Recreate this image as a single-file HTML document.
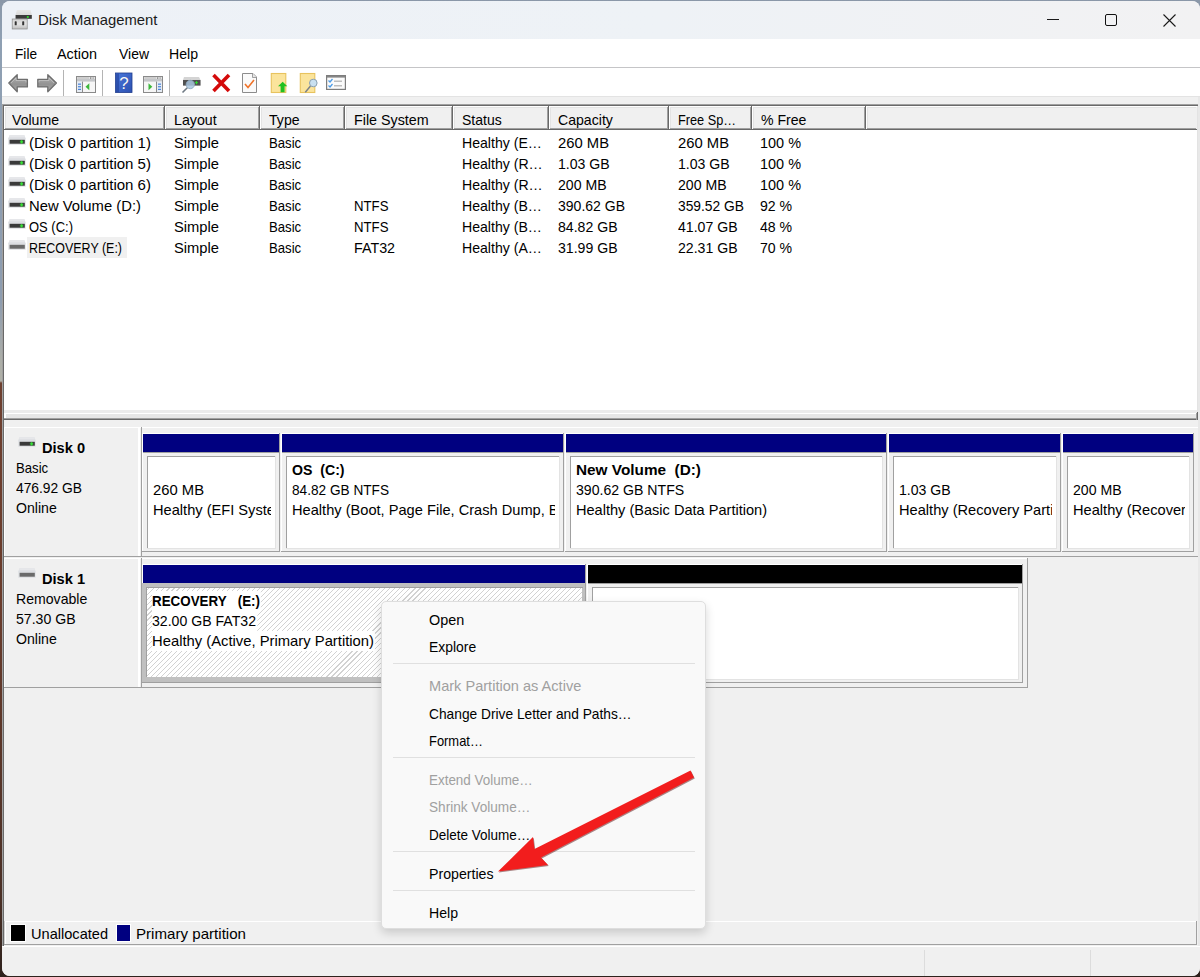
<!DOCTYPE html>
<html><head><meta charset="utf-8"><style>
html,body{margin:0;padding:0;width:1200px;height:977px;overflow:hidden;}
body{position:relative;background:#2a1e19;}
#desk{position:absolute;left:0;top:0;width:1200px;height:977px;background:linear-gradient(180deg,#8a97a8 0px,#8fa0b3 40px,#8e9db0 300px,#acaea8 360px,#b0b0a8 381px,#6e4030 383px,#6a3c2c 600px,#4a3026 900px,#2e221d 977px);}
#win{position:absolute;left:0;top:0;width:1200px;height:977px;clip-path:inset(1px 0px 1px 2px round 8px);background:#f0f0f0;}
.a{position:absolute;}
.t{position:absolute;white-space:nowrap;line-height:20px;font-family:"Liberation Sans",sans-serif;font-size:15px;color:#000;}
.hatch{background-color:#fff;background-image:repeating-linear-gradient(-45deg,#fff 0px,#fff 2.8px,#d2d2d2 2.8px,#d2d2d2 3.55px);}
</style></head><body>
<div id="desk"></div>
<div id="win">
<div class="a" style="left:0px;top:0px;width:1200px;height:39px;background:linear-gradient(90deg,#edf1f7 0%,#eef2f6 55%,#f2f2f3 100%)"></div>
<svg class="a" style="left:11px;top:9px" width="22" height="22" viewBox="0 0 22 22">
<defs><linearGradient id="dtop" x1="0" y1="0" x2="0" y2="1"><stop offset="0" stop-color="#e8e8e8"/><stop offset="1" stop-color="#cfcfcf"/></linearGradient>
<linearGradient id="usb" x1="0" y1="0" x2="0" y2="1"><stop offset="0" stop-color="#d2d2d2"/><stop offset="0.5" stop-color="#e4e4e4"/><stop offset="1" stop-color="#bcbcbc"/></linearGradient></defs>
<path d="M6 1 H19.5 L20.8 5.5 V9.8 H4.6 V5.5 Z" fill="url(#dtop)"/>
<rect x="4.6" y="6" width="16.2" height="3.8" fill="#3a3a3a"/>
<circle cx="16.8" cy="8" r="1.1" fill="#2ee02e"/>
<rect x="1.2" y="10" width="15" height="10" fill="url(#usb)" stroke="#8a8a8a" stroke-width="0.7"/>
<rect x="3.7" y="12.3" width="2" height="4" rx="0.6" fill="#333"/>
<rect x="11.2" y="12.3" width="2" height="4" rx="0.6" fill="#333"/>
</svg>
<div class="t" style="left:37.6px;top:9.60px;font-size:15px;color:#1b1b1b;transform:scaleX(0.9884);transform-origin:0 0;">Disk Management</div>
<div class="a" style="left:1047px;top:19px;width:12px;height:1px;background:#1a1a1a"></div>
<div class="a" style="left:1105px;top:14px;width:9.6px;height:9.6px;border:1.2px solid #111;border-radius:2px"></div>
<svg class="a" style="left:1163px;top:14px" width="13" height="13" viewBox="0 0 13 13"><path d="M0.5 0.5 L12.5 12.5 M12.5 0.5 L0.5 12.5" stroke="#1a1a1a" stroke-width="1.1"/></svg>
<div class="a" style="left:0px;top:39px;width:1200px;height:28px;background:#fff"></div>
<div class="t" style="left:15px;top:43.50px;font-size:15px;color:#000;transform:scaleX(0.9110);transform-origin:0 0;">File</div>
<div class="t" style="left:57.4px;top:43.50px;font-size:15px;color:#000;transform:scaleX(0.9592);transform-origin:0 0;">Action</div>
<div class="t" style="left:118.9px;top:43.50px;font-size:15px;color:#000;transform:scaleX(0.9302);transform-origin:0 0;">View</div>
<div class="t" style="left:168.8px;top:43.50px;font-size:15px;color:#000;transform:scaleX(0.9408);transform-origin:0 0;">Help</div>
<div class="a" style="left:0px;top:67px;width:1200px;height:1px;background:#c5c5c7"></div>
<div class="a" style="left:0px;top:68px;width:1200px;height:28px;background:#fff"></div>
<div class="a" style="left:0px;top:96px;width:1200px;height:1px;background:#e3e3e3"></div>
<div class="a" style="left:0px;top:97px;width:1200px;height:850px;background:#f0f0f0"></div>
<div class="a" style="left:63px;top:70px;width:1px;height:26px;background:#b4b4b4"></div>
<div class="a" style="left:102px;top:70px;width:1px;height:26px;background:#b4b4b4"></div>
<div class="a" style="left:169px;top:70px;width:1px;height:26px;background:#b4b4b4"></div>

<svg class="a" style="left:0;top:68px" width="360" height="28" viewBox="0 68 360 28">
<defs>
<linearGradient id="garr" x1="0" y1="0" x2="0" y2="1"><stop offset="0" stop-color="#b4b4b4"/><stop offset="0.55" stop-color="#939393"/><stop offset="1" stop-color="#a8a8a8"/></linearGradient>
<linearGradient id="ghelp" x1="0" y1="0" x2="1" y2="1"><stop offset="0" stop-color="#4a78dc"/><stop offset="1" stop-color="#2c50b0"/></linearGradient>
</defs>
<!-- back -->
<path d="M8.8 83 L17.2 74.8 V79.3 H27.4 V86.9 H17.2 V91.8 Z" fill="url(#garr)" stroke="#6e6e6e" stroke-width="1.3" stroke-linejoin="round"/>
<path d="M11 83 L16 78 V80.5 H26 V82.5" fill="none" stroke="#d8d8d8" stroke-width="0.7" opacity="0.7"/>
<!-- forward -->
<path d="M56.4 83 L47.8 74.8 V79.3 H37.8 V86.9 H47.8 V91.8 Z" fill="url(#garr)" stroke="#6e6e6e" stroke-width="1.3" stroke-linejoin="round"/>
<path d="M39 82.5 V80.5 H49 V78 L54 83" fill="none" stroke="#d8d8d8" stroke-width="0.7" opacity="0.7"/>
<!-- console tree -->
<rect x="76.5" y="76.5" width="19" height="16" fill="#f6f6f6" stroke="#8a8a8a"/>
<rect x="77" y="77" width="18" height="2" fill="#e2e2e2"/>
<line x1="77.5" y1="78" x2="89" y2="78" stroke="#b0b0b0" stroke-width="0.8"/>
<rect x="90" y="77.4" width="1.3" height="1.3" fill="#777"/><rect x="92.5" y="77.4" width="1.3" height="1.3" fill="#999"/>
<rect x="77" y="79" width="18" height="2.6" fill="#c4c6c9"/>
<rect x="77" y="81.6" width="5" height="10.4" fill="#e6ecf4"/>
<line x1="82.5" y1="81.6" x2="82.5" y2="92" stroke="#8a8a8a"/>
<rect x="78" y="83.6" width="3" height="1.1" fill="#3b7ad9"/><rect x="78" y="86.2" width="3" height="1.1" fill="#3b7ad9"/><rect x="78" y="88.8" width="3" height="1.1" fill="#3b7ad9"/>
<path d="M85.5 86.8 L89.3 83.3 V90.3 Z" fill="#3cb83c"/>
<!-- help -->
<rect x="115.5" y="73" width="16.5" height="19.5" fill="url(#ghelp)" stroke="#203c8c" stroke-width="0.8"/>
<rect x="116" y="73.5" width="3" height="18.5" fill="#1f3f9a" opacity="0.6"/>
<text x="124.5" y="89.3" font-family="Liberation Sans" font-size="17" fill="#445" text-anchor="middle" opacity="0.5">?</text>
<text x="124" y="88.8" font-family="Liberation Sans" font-size="17" fill="#f4f6ff" text-anchor="middle">?</text>
<!-- action pane -->
<rect x="143.5" y="76.5" width="19" height="16" fill="#f6f6f6" stroke="#8a8a8a"/>
<rect x="144" y="77" width="18" height="2" fill="#e2e2e2"/>
<line x1="144.5" y1="78" x2="156" y2="78" stroke="#b0b0b0" stroke-width="0.8"/>
<rect x="157" y="77.4" width="1.3" height="1.3" fill="#777"/><rect x="159.5" y="77.4" width="1.3" height="1.3" fill="#999"/>
<rect x="144" y="79" width="18" height="2.6" fill="#c4c6c9"/>
<rect x="157" y="81.6" width="5" height="10.4" fill="#e6ecf4"/>
<line x1="156.5" y1="81.6" x2="156.5" y2="92" stroke="#8a8a8a"/>
<rect x="158" y="83.6" width="3" height="1.1" fill="#3b7ad9"/><rect x="158" y="86.2" width="3" height="1.1" fill="#3b7ad9"/><rect x="158" y="88.8" width="3" height="1.1" fill="#3b7ad9"/>
<path d="M148.5 83.3 L152.3 86.8 L148.5 90.3 Z" fill="#3cb83c"/>
<!-- rescan -->
<path d="M184 77 H199 L200.5 80 V86 H183 V80 Z" fill="#d4d4d4"/>
<rect x="183" y="80" width="17.5" height="5.5" fill="#505050"/>
<path d="M195 82.7 h3 M196.5 81.2 v3" stroke="#2ee02e" stroke-width="1"/>
<circle cx="190.3" cy="84.5" r="4.2" fill="#a9c6df" fill-opacity="0.85" stroke="#8aa6bd" stroke-width="0.8"/>
<line x1="187.3" y1="87.8" x2="182.5" y2="92.5" stroke="#6f7a84" stroke-width="1.6"/>
<!-- red X -->
<path d="M213.5 75 L229 91 M229 75 L213.5 91" stroke="#d40a0a" stroke-width="3.6"/>
<!-- doc check -->
<path d="M242.5 73.5 H253 L256.5 77 V92.5 H242.5 Z" fill="#fafafa" stroke="#8c8c8c"/>
<path d="M252.5 73.5 V77.5 H256.5" fill="#e6e6e6" stroke="#8c8c8c" stroke-width="0.8"/>
<path d="M245 84 L248 87.5 L254 80" fill="none" stroke="#f0742a" stroke-width="1.6"/>
<!-- folder up -->
<rect x="271.3" y="73.5" width="14.5" height="19" fill="#fbe49c" stroke="#e8c35e" stroke-width="1.1"/>
<path d="M278 86.3 L282.7 81.8 L287.3 86.3 H284.6 V92.3 H280.6 V86.3 Z" fill="#22c022"/>
<!-- folder search -->
<rect x="300.3" y="73.5" width="14.5" height="19" fill="#fbe49c" stroke="#e8c35e" stroke-width="1.1"/>
<line x1="310.5" y1="86" x2="305.3" y2="92.3" stroke="#7a8088" stroke-width="1.4"/>
<circle cx="313.3" cy="83" r="3.8" fill="#c9e0f0" stroke="#8aa0b0" stroke-width="1"/>
<!-- checklist -->
<rect x="326.6" y="75.6" width="18.8" height="13.8" fill="#fbfbfb" stroke="#7d7d7d" stroke-width="1.2"/>
<rect x="327" y="76" width="18" height="1.6" fill="#858585"/>
<path d="M328.5 80.5 L330 82 L332.5 79 M328.5 85.5 L330 87 L332.5 84" fill="none" stroke="#4c9be6" stroke-width="1.3"/>
<rect x="334" y="80.5" width="8" height="1.5" fill="#bdbdbd"/><rect x="334" y="85" width="8" height="1.5" fill="#bdbdbd"/>
</svg>
<div class="a" style="left:2px;top:104px;width:1197px;height:1px;background:#a0a0a0"></div>
<div class="a" style="left:2px;top:105px;width:1197px;height:1px;background:#696969"></div>
<div class="a" style="left:2px;top:104px;width:1px;height:842px;background:#a0a0a0"></div>
<div class="a" style="left:3px;top:105px;width:1px;height:841px;background:#696969"></div>
<div class="a" style="left:4px;top:106px;width:1193px;height:305px;background:#fff"></div>
<div class="a" style="left:1197px;top:106px;width:1px;height:307px;background:#e3e3e3"></div>
<div class="a" style="left:1198px;top:97px;width:2px;height:850px;background:#e8e8e8"></div>
<div class="a" style="left:4px;top:106px;width:161px;height:24px;background:#f0f0f0"></div>
<div class="a" style="left:4px;top:106px;width:161px;height:1px;background:#fff"></div>
<div class="a" style="left:4px;top:106px;width:1px;height:23px;background:#fff"></div>
<div class="a" style="left:5px;top:107px;width:159px;height:1px;background:#e3e3e3"></div>
<div class="a" style="left:5px;top:107px;width:1px;height:21px;background:#e3e3e3"></div>
<div class="a" style="left:163px;top:107px;width:1px;height:22px;background:#a0a0a0"></div>
<div class="a" style="left:164px;top:106px;width:1px;height:24px;background:#696969"></div>
<div class="a" style="left:5px;top:128px;width:159px;height:1px;background:#a0a0a0"></div>
<div class="a" style="left:4px;top:129px;width:161px;height:1px;background:#696969"></div>
<div class="t" style="left:12px;top:110.30px;font-size:15px;color:#000;transform:scaleX(0.9400);transform-origin:0 0;">Volume</div>
<div class="a" style="left:165px;top:106px;width:95px;height:24px;background:#f0f0f0"></div>
<div class="a" style="left:165px;top:106px;width:95px;height:1px;background:#fff"></div>
<div class="a" style="left:165px;top:106px;width:1px;height:23px;background:#fff"></div>
<div class="a" style="left:166px;top:107px;width:93px;height:1px;background:#e3e3e3"></div>
<div class="a" style="left:166px;top:107px;width:1px;height:21px;background:#e3e3e3"></div>
<div class="a" style="left:258px;top:107px;width:1px;height:22px;background:#a0a0a0"></div>
<div class="a" style="left:259px;top:106px;width:1px;height:24px;background:#696969"></div>
<div class="a" style="left:166px;top:128px;width:93px;height:1px;background:#a0a0a0"></div>
<div class="a" style="left:165px;top:129px;width:95px;height:1px;background:#696969"></div>
<div class="t" style="left:173.5px;top:110.30px;font-size:15px;color:#000;transform:scaleX(0.9473);transform-origin:0 0;">Layout</div>
<div class="a" style="left:260px;top:106px;width:85px;height:24px;background:#f0f0f0"></div>
<div class="a" style="left:260px;top:106px;width:85px;height:1px;background:#fff"></div>
<div class="a" style="left:260px;top:106px;width:1px;height:23px;background:#fff"></div>
<div class="a" style="left:261px;top:107px;width:83px;height:1px;background:#e3e3e3"></div>
<div class="a" style="left:261px;top:107px;width:1px;height:21px;background:#e3e3e3"></div>
<div class="a" style="left:343px;top:107px;width:1px;height:22px;background:#a0a0a0"></div>
<div class="a" style="left:344px;top:106px;width:1px;height:24px;background:#696969"></div>
<div class="a" style="left:261px;top:128px;width:83px;height:1px;background:#a0a0a0"></div>
<div class="a" style="left:260px;top:129px;width:85px;height:1px;background:#696969"></div>
<div class="t" style="left:268.5px;top:110.30px;font-size:15px;color:#000;transform:scaleX(0.9400);transform-origin:0 0;">Type</div>
<div class="a" style="left:345px;top:106px;width:108px;height:24px;background:#f0f0f0"></div>
<div class="a" style="left:345px;top:106px;width:108px;height:1px;background:#fff"></div>
<div class="a" style="left:345px;top:106px;width:1px;height:23px;background:#fff"></div>
<div class="a" style="left:346px;top:107px;width:106px;height:1px;background:#e3e3e3"></div>
<div class="a" style="left:346px;top:107px;width:1px;height:21px;background:#e3e3e3"></div>
<div class="a" style="left:451px;top:107px;width:1px;height:22px;background:#a0a0a0"></div>
<div class="a" style="left:452px;top:106px;width:1px;height:24px;background:#696969"></div>
<div class="a" style="left:346px;top:128px;width:106px;height:1px;background:#a0a0a0"></div>
<div class="a" style="left:345px;top:129px;width:108px;height:1px;background:#696969"></div>
<div class="t" style="left:353.5px;top:110.30px;font-size:15px;color:#000;transform:scaleX(0.9531);transform-origin:0 0;">File System</div>
<div class="a" style="left:453px;top:106px;width:96px;height:24px;background:#f0f0f0"></div>
<div class="a" style="left:453px;top:106px;width:96px;height:1px;background:#fff"></div>
<div class="a" style="left:453px;top:106px;width:1px;height:23px;background:#fff"></div>
<div class="a" style="left:454px;top:107px;width:94px;height:1px;background:#e3e3e3"></div>
<div class="a" style="left:454px;top:107px;width:1px;height:21px;background:#e3e3e3"></div>
<div class="a" style="left:547px;top:107px;width:1px;height:22px;background:#a0a0a0"></div>
<div class="a" style="left:548px;top:106px;width:1px;height:24px;background:#696969"></div>
<div class="a" style="left:454px;top:128px;width:94px;height:1px;background:#a0a0a0"></div>
<div class="a" style="left:453px;top:129px;width:96px;height:1px;background:#696969"></div>
<div class="t" style="left:461.5px;top:110.30px;font-size:15px;color:#000;transform:scaleX(0.9336);transform-origin:0 0;">Status</div>
<div class="a" style="left:549px;top:106px;width:120px;height:24px;background:#f0f0f0"></div>
<div class="a" style="left:549px;top:106px;width:120px;height:1px;background:#fff"></div>
<div class="a" style="left:549px;top:106px;width:1px;height:23px;background:#fff"></div>
<div class="a" style="left:550px;top:107px;width:118px;height:1px;background:#e3e3e3"></div>
<div class="a" style="left:550px;top:107px;width:1px;height:21px;background:#e3e3e3"></div>
<div class="a" style="left:667px;top:107px;width:1px;height:22px;background:#a0a0a0"></div>
<div class="a" style="left:668px;top:106px;width:1px;height:24px;background:#696969"></div>
<div class="a" style="left:550px;top:128px;width:118px;height:1px;background:#a0a0a0"></div>
<div class="a" style="left:549px;top:129px;width:120px;height:1px;background:#696969"></div>
<div class="t" style="left:557.5px;top:110.30px;font-size:15px;color:#000;transform:scaleX(0.9400);transform-origin:0 0;">Capacity</div>
<div class="a" style="left:669px;top:106px;width:83px;height:24px;background:#f0f0f0"></div>
<div class="a" style="left:669px;top:106px;width:83px;height:1px;background:#fff"></div>
<div class="a" style="left:669px;top:106px;width:1px;height:23px;background:#fff"></div>
<div class="a" style="left:670px;top:107px;width:81px;height:1px;background:#e3e3e3"></div>
<div class="a" style="left:670px;top:107px;width:1px;height:21px;background:#e3e3e3"></div>
<div class="a" style="left:750px;top:107px;width:1px;height:22px;background:#a0a0a0"></div>
<div class="a" style="left:751px;top:106px;width:1px;height:24px;background:#696969"></div>
<div class="a" style="left:670px;top:128px;width:81px;height:1px;background:#a0a0a0"></div>
<div class="a" style="left:669px;top:129px;width:83px;height:1px;background:#696969"></div>
<div class="t" style="left:677.5px;top:110.30px;font-size:15px;color:#000;transform:scaleX(0.8489);transform-origin:0 0;">Free Sp…</div>
<div class="a" style="left:752px;top:106px;width:114px;height:24px;background:#f0f0f0"></div>
<div class="a" style="left:752px;top:106px;width:114px;height:1px;background:#fff"></div>
<div class="a" style="left:752px;top:106px;width:1px;height:23px;background:#fff"></div>
<div class="a" style="left:753px;top:107px;width:112px;height:1px;background:#e3e3e3"></div>
<div class="a" style="left:753px;top:107px;width:1px;height:21px;background:#e3e3e3"></div>
<div class="a" style="left:864px;top:107px;width:1px;height:22px;background:#a0a0a0"></div>
<div class="a" style="left:865px;top:106px;width:1px;height:24px;background:#696969"></div>
<div class="a" style="left:753px;top:128px;width:112px;height:1px;background:#a0a0a0"></div>
<div class="a" style="left:752px;top:129px;width:114px;height:1px;background:#696969"></div>
<div class="t" style="left:760.5px;top:110.30px;font-size:15px;color:#000;transform:scaleX(0.9400);transform-origin:0 0;">% Free</div>
<div class="a" style="left:866px;top:106px;width:331px;height:24px;background:#f0f0f0"></div>
<div class="a" style="left:866px;top:106px;width:331px;height:1px;background:#fff"></div>
<div class="a" style="left:866px;top:106px;width:1px;height:23px;background:#fff"></div>
<div class="a" style="left:867px;top:107px;width:329px;height:1px;background:#e3e3e3"></div>
<div class="a" style="left:867px;top:107px;width:1px;height:21px;background:#e3e3e3"></div>
<div class="a" style="left:867px;top:128px;width:329px;height:1px;background:#a0a0a0"></div>
<div class="a" style="left:866px;top:129px;width:331px;height:1px;background:#696969"></div>
<div class="a" style="left:27px;top:237px;width:100px;height:21px;background:#f0f0f0"></div>
<svg class="a" style="left:8px;top:135.2px" width="19" height="11" viewBox="0 0 19 11">
<path d="M1.6 0.2 H16.4 L17.6 3.2 V9.7 H0.3 V3.2 Z" fill="#dcdee2"/>
<path d="M1.6 0.2 H16.4 L17 2.2 H1 Z" fill="#e6e7ea"/>
<rect x="1.6" y="4.8" width="15.2" height="3.9" fill="#3a3a3a"/>
<path d="M13.6 4.9 L15.1 6.8 L13.6 8.7 L12.1 6.8 Z" fill="#3ee83e"/><circle cx="13.6" cy="6.8" r="1.9" fill="#2fd02f" opacity="0.45"/>
</svg>
<div class="t" style="left:29.3px;top:132.50px;font-size:15px;color:#000;transform:scaleX(1.0023);transform-origin:0 0;">(Disk 0 partition 1)</div>
<div class="t" style="left:173.5px;top:132.50px;font-size:15px;color:#000;transform:scaleX(0.9820);transform-origin:0 0;">Simple</div>
<div class="t" style="left:268.5px;top:132.50px;font-size:15px;color:#000;transform:scaleX(0.8780);transform-origin:0 0;">Basic</div>
<div class="t" style="left:461.5px;top:132.50px;font-size:15px;color:#000;transform:scaleX(0.9400);transform-origin:0 0;">Healthy (E…</div>
<div class="t" style="left:557.5px;top:132.50px;font-size:15px;color:#000;transform:scaleX(0.9869);transform-origin:0 0;">260 MB</div>
<div class="t" style="left:677.5px;top:132.50px;font-size:15px;color:#000;transform:scaleX(0.9869);transform-origin:0 0;">260 MB</div>
<div class="t" style="left:760px;top:132.50px;font-size:15px;color:#000;transform:scaleX(0.9641);transform-origin:0 0;">100 %</div>
<svg class="a" style="left:8px;top:156.2px" width="19" height="11" viewBox="0 0 19 11">
<path d="M1.6 0.2 H16.4 L17.6 3.2 V9.7 H0.3 V3.2 Z" fill="#dcdee2"/>
<path d="M1.6 0.2 H16.4 L17 2.2 H1 Z" fill="#e6e7ea"/>
<rect x="1.6" y="4.8" width="15.2" height="3.9" fill="#3a3a3a"/>
<path d="M13.6 4.9 L15.1 6.8 L13.6 8.7 L12.1 6.8 Z" fill="#3ee83e"/><circle cx="13.6" cy="6.8" r="1.9" fill="#2fd02f" opacity="0.45"/>
</svg>
<div class="t" style="left:29.3px;top:153.50px;font-size:15px;color:#000;transform:scaleX(1.0023);transform-origin:0 0;">(Disk 0 partition 5)</div>
<div class="t" style="left:173.5px;top:153.50px;font-size:15px;color:#000;transform:scaleX(0.9820);transform-origin:0 0;">Simple</div>
<div class="t" style="left:268.5px;top:153.50px;font-size:15px;color:#000;transform:scaleX(0.8780);transform-origin:0 0;">Basic</div>
<div class="t" style="left:461.5px;top:153.50px;font-size:15px;color:#000;transform:scaleX(0.9400);transform-origin:0 0;">Healthy (R…</div>
<div class="t" style="left:557.5px;top:153.50px;font-size:15px;color:#000;transform:scaleX(0.9400);transform-origin:0 0;">1.03 GB</div>
<div class="t" style="left:677.5px;top:153.50px;font-size:15px;color:#000;transform:scaleX(0.9400);transform-origin:0 0;">1.03 GB</div>
<div class="t" style="left:760px;top:153.50px;font-size:15px;color:#000;transform:scaleX(0.9641);transform-origin:0 0;">100 %</div>
<svg class="a" style="left:8px;top:177.2px" width="19" height="11" viewBox="0 0 19 11">
<path d="M1.6 0.2 H16.4 L17.6 3.2 V9.7 H0.3 V3.2 Z" fill="#dcdee2"/>
<path d="M1.6 0.2 H16.4 L17 2.2 H1 Z" fill="#e6e7ea"/>
<rect x="1.6" y="4.8" width="15.2" height="3.9" fill="#3a3a3a"/>
<path d="M13.6 4.9 L15.1 6.8 L13.6 8.7 L12.1 6.8 Z" fill="#3ee83e"/><circle cx="13.6" cy="6.8" r="1.9" fill="#2fd02f" opacity="0.45"/>
</svg>
<div class="t" style="left:29.3px;top:174.50px;font-size:15px;color:#000;transform:scaleX(1.0023);transform-origin:0 0;">(Disk 0 partition 6)</div>
<div class="t" style="left:173.5px;top:174.50px;font-size:15px;color:#000;transform:scaleX(0.9820);transform-origin:0 0;">Simple</div>
<div class="t" style="left:268.5px;top:174.50px;font-size:15px;color:#000;transform:scaleX(0.8780);transform-origin:0 0;">Basic</div>
<div class="t" style="left:461.5px;top:174.50px;font-size:15px;color:#000;transform:scaleX(0.9400);transform-origin:0 0;">Healthy (R…</div>
<div class="t" style="left:557.5px;top:174.50px;font-size:15px;color:#000;transform:scaleX(0.9400);transform-origin:0 0;">200 MB</div>
<div class="t" style="left:677.5px;top:174.50px;font-size:15px;color:#000;transform:scaleX(0.9400);transform-origin:0 0;">200 MB</div>
<div class="t" style="left:760px;top:174.50px;font-size:15px;color:#000;transform:scaleX(0.9641);transform-origin:0 0;">100 %</div>
<svg class="a" style="left:8px;top:198.2px" width="19" height="11" viewBox="0 0 19 11">
<path d="M1.6 0.2 H16.4 L17.6 3.2 V9.7 H0.3 V3.2 Z" fill="#dcdee2"/>
<path d="M1.6 0.2 H16.4 L17 2.2 H1 Z" fill="#e6e7ea"/>
<rect x="1.6" y="4.8" width="15.2" height="3.9" fill="#3a3a3a"/>
<path d="M13.6 4.9 L15.1 6.8 L13.6 8.7 L12.1 6.8 Z" fill="#3ee83e"/><circle cx="13.6" cy="6.8" r="1.9" fill="#2fd02f" opacity="0.45"/>
</svg>
<div class="t" style="left:29.3px;top:195.50px;font-size:15px;color:#000;transform:scaleX(0.9877);transform-origin:0 0;">New Volume (D:)</div>
<div class="t" style="left:173.5px;top:195.50px;font-size:15px;color:#000;transform:scaleX(0.9820);transform-origin:0 0;">Simple</div>
<div class="t" style="left:268.5px;top:195.50px;font-size:15px;color:#000;transform:scaleX(0.8780);transform-origin:0 0;">Basic</div>
<div class="t" style="left:353.5px;top:195.50px;font-size:15px;color:#000;transform:scaleX(0.8812);transform-origin:0 0;">NTFS</div>
<div class="t" style="left:461.5px;top:195.50px;font-size:15px;color:#000;transform:scaleX(0.9400);transform-origin:0 0;">Healthy (B…</div>
<div class="t" style="left:557.5px;top:195.50px;font-size:15px;color:#000;transform:scaleX(0.9344);transform-origin:0 0;">390.62 GB</div>
<div class="t" style="left:677.5px;top:195.50px;font-size:15px;color:#000;transform:scaleX(0.9205);transform-origin:0 0;">359.52 GB</div>
<div class="t" style="left:760px;top:195.50px;font-size:15px;color:#000;transform:scaleX(0.9400);transform-origin:0 0;">92 %</div>
<svg class="a" style="left:8px;top:219.2px" width="19" height="11" viewBox="0 0 19 11">
<path d="M1.6 0.2 H16.4 L17.6 3.2 V9.7 H0.3 V3.2 Z" fill="#dcdee2"/>
<path d="M1.6 0.2 H16.4 L17 2.2 H1 Z" fill="#e6e7ea"/>
<rect x="1.6" y="4.8" width="15.2" height="3.9" fill="#3a3a3a"/>
<path d="M13.6 4.9 L15.1 6.8 L13.6 8.7 L12.1 6.8 Z" fill="#3ee83e"/><circle cx="13.6" cy="6.8" r="1.9" fill="#2fd02f" opacity="0.45"/>
</svg>
<div class="t" style="left:29.3px;top:216.50px;font-size:15px;color:#000;transform:scaleX(0.8653);transform-origin:0 0;">OS (C:)</div>
<div class="t" style="left:173.5px;top:216.50px;font-size:15px;color:#000;transform:scaleX(0.9820);transform-origin:0 0;">Simple</div>
<div class="t" style="left:268.5px;top:216.50px;font-size:15px;color:#000;transform:scaleX(0.8780);transform-origin:0 0;">Basic</div>
<div class="t" style="left:353.5px;top:216.50px;font-size:15px;color:#000;transform:scaleX(0.8812);transform-origin:0 0;">NTFS</div>
<div class="t" style="left:461.5px;top:216.50px;font-size:15px;color:#000;transform:scaleX(0.9400);transform-origin:0 0;">Healthy (B…</div>
<div class="t" style="left:557.5px;top:216.50px;font-size:15px;color:#000;transform:scaleX(0.9400);transform-origin:0 0;">84.82 GB</div>
<div class="t" style="left:677.5px;top:216.50px;font-size:15px;color:#000;transform:scaleX(0.9400);transform-origin:0 0;">41.07 GB</div>
<div class="t" style="left:760px;top:216.50px;font-size:15px;color:#000;transform:scaleX(0.9400);transform-origin:0 0;">48 %</div>
<svg class="a" style="left:8px;top:240.2px" width="19" height="11" viewBox="0 0 19 11">
<path d="M1.6 0.2 H16.4 L17.6 3.2 V9.7 H0.3 V3.2 Z" fill="#dcdee2"/>
<path d="M1.6 0.2 H16.4 L17 2.2 H1 Z" fill="#e6e7ea"/>
<rect x="1.6" y="4.8" width="15.2" height="3.9" fill="#6a6a6a"/>

</svg>
<div class="t" style="left:29.3px;top:237.50px;font-size:15px;color:#000;transform:scaleX(0.8305);transform-origin:0 0;">RECOVERY (E:)</div>
<div class="t" style="left:173.5px;top:237.50px;font-size:15px;color:#000;transform:scaleX(0.9820);transform-origin:0 0;">Simple</div>
<div class="t" style="left:268.5px;top:237.50px;font-size:15px;color:#000;transform:scaleX(0.8780);transform-origin:0 0;">Basic</div>
<div class="t" style="left:353.5px;top:237.50px;font-size:15px;color:#000;transform:scaleX(0.9524);transform-origin:0 0;">FAT32</div>
<div class="t" style="left:461.5px;top:237.50px;font-size:15px;color:#000;transform:scaleX(0.9400);transform-origin:0 0;">Healthy (A…</div>
<div class="t" style="left:557.5px;top:237.50px;font-size:15px;color:#000;transform:scaleX(0.9400);transform-origin:0 0;">31.99 GB</div>
<div class="t" style="left:677.5px;top:237.50px;font-size:15px;color:#000;transform:scaleX(0.9400);transform-origin:0 0;">22.31 GB</div>
<div class="t" style="left:760px;top:237.50px;font-size:15px;color:#000;transform:scaleX(0.9400);transform-origin:0 0;">70 %</div>
<div class="a" style="left:4px;top:410px;width:1193px;height:3px;background:#ebebeb"></div>
<div class="a" style="left:4px;top:413px;width:1193px;height:1px;background:#fff"></div>
<div class="a" style="left:4px;top:414px;width:1192px;height:4px;background:#e6e6e6"></div>
<div class="a" style="left:4px;top:413px;width:2px;height:5px;background:#fff"></div>
<div class="a" style="left:4px;top:418px;width:1194px;height:1px;background:#a0a0a0"></div>
<div class="a" style="left:4px;top:419px;width:1194px;height:1px;background:#696969"></div>
<div class="a" style="left:1196px;top:413px;width:1px;height:7px;background:#a0a0a0"></div>
<div class="a" style="left:1197px;top:412px;width:1px;height:8px;background:#696969"></div>
<div class="a" style="left:4px;top:420px;width:1193px;height:526px;background:#f0f0f0"></div>
<div class="a" style="left:2px;top:104px;width:1px;height:842px;background:#a0a0a0"></div>
<div class="a" style="left:3px;top:105px;width:1px;height:841px;background:#696969"></div>
<div class="a" style="left:4px;top:427px;width:1194px;height:1px;background:#fff"></div>
<div class="a" style="left:4px;top:427px;width:1px;height:129px;background:#fff"></div>
<div class="a" style="left:4px;top:556px;width:1194px;height:1px;background:#a0a0a0"></div>
<div class="a" style="left:138px;top:428px;width:2px;height:128px;background:#fff"></div>
<div class="a" style="left:141px;top:427px;width:1px;height:130px;background:#a0a0a0"></div>
<svg class="a" style="left:17.6px;top:437.3px" width="19" height="11" viewBox="0 0 19 11">
<path d="M1.6 0.2 H16.4 L17.6 3.2 V9.7 H0.3 V3.2 Z" fill="#dcdee2"/>
<path d="M1.6 0.2 H16.4 L17 2.2 H1 Z" fill="#e6e7ea"/>
<rect x="1.6" y="4.8" width="15.2" height="3.9" fill="#3a3a3a"/>
<path d="M13.6 4.9 L15.1 6.8 L13.6 8.7 L12.1 6.8 Z" fill="#3ee83e"/><circle cx="13.6" cy="6.8" r="1.9" fill="#2fd02f" opacity="0.45"/>
</svg>
<div class="t" style="left:42px;top:438.00px;font-size:15px;color:#000;font-weight:bold;transform:scaleX(0.9734);transform-origin:0 0;">Disk 0</div>
<div class="t" style="left:16.3px;top:457.80px;font-size:15px;color:#000;transform:scaleX(0.8780);transform-origin:0 0;">Basic</div>
<div class="t" style="left:16.3px;top:477.80px;font-size:15px;color:#000;transform:scaleX(0.9205);transform-origin:0 0;">476.92 GB</div>
<div class="t" style="left:16.3px;top:497.80px;font-size:15px;color:#000;transform:scaleX(0.9400);transform-origin:0 0;">Online</div>
<div class="a" style="left:4px;top:558px;width:1024px;height:1px;background:#fff"></div>
<div class="a" style="left:4px;top:558px;width:1px;height:129px;background:#fff"></div>
<div class="a" style="left:4px;top:687px;width:1024px;height:1px;background:#a0a0a0"></div>
<div class="a" style="left:138px;top:559px;width:2px;height:128px;background:#fff"></div>
<div class="a" style="left:141px;top:558px;width:1px;height:130px;background:#a0a0a0"></div>
<div class="a" style="left:1027px;top:558px;width:1px;height:130px;background:#a0a0a0"></div>
<svg class="a" style="left:17.6px;top:568.3px" width="19" height="11" viewBox="0 0 19 11">
<path d="M1.6 0.2 H16.4 L17.6 3.2 V9.7 H0.3 V3.2 Z" fill="#dcdee2"/>
<path d="M1.6 0.2 H16.4 L17 2.2 H1 Z" fill="#e6e7ea"/>
<rect x="1.6" y="4.8" width="15.2" height="3.9" fill="#6a6a6a"/>

</svg>
<div class="t" style="left:42px;top:569.00px;font-size:15px;color:#000;font-weight:bold;transform:scaleX(0.9734);transform-origin:0 0;">Disk 1</div>
<div class="t" style="left:16.3px;top:588.80px;font-size:15px;color:#000;transform:scaleX(0.9400);transform-origin:0 0;">Removable</div>
<div class="t" style="left:16.3px;top:608.80px;font-size:15px;color:#000;transform:scaleX(0.9400);transform-origin:0 0;">57.30 GB</div>
<div class="t" style="left:16.3px;top:628.80px;font-size:15px;color:#000;transform:scaleX(0.9400);transform-origin:0 0;">Online</div>
<div class="a" style="left:142px;top:433px;width:137px;height:1px;background:#fff"></div>
<div class="a" style="left:142px;top:433px;width:1px;height:118px;background:#fff"></div>
<div class="a" style="left:143px;top:434px;width:136px;height:18px;background:#000080"></div>
<div class="a" style="left:279px;top:433px;width:1px;height:119px;background:#a0a0a0"></div>
<div class="a" style="left:143px;top:452px;width:136px;height:1px;background:#a0a0a0"></div>
<div class="a" style="left:142px;top:551px;width:138px;height:1px;background:#a0a0a0"></div>
<div class="a" style="left:147px;top:456px;width:1px;height:92px;background:#a0a0a0"></div>
<div class="a" style="left:147px;top:456px;width:128px;height:1px;background:#a0a0a0"></div>
<div class="a" style="left:148px;top:457px;width:127px;height:91px;background:#fff"></div>
<div class="a" style="left:275px;top:456px;width:1px;height:93px;background:#e3e3e3"></div>
<div class="a" style="left:147px;top:548px;width:129px;height:1px;background:#e3e3e3"></div>
<div class="a" style="left:148px;top:457px;width:123px;height:91px;overflow:hidden">
<div class="t" style="left:4.699999999999989px;top:2.80px;transform:scaleX(0.9400);transform-origin:0 0;"></div>
<div class="t" style="left:4.699999999999989px;top:22.80px;transform:scaleX(0.9869);transform-origin:0 0;">260 MB</div>
<div class="t" style="left:4.699999999999989px;top:42.80px;transform:scaleX(0.9750);transform-origin:0 0;">Healthy (EFI System Partition)</div>
</div>
<div class="a" style="left:281px;top:433px;width:282px;height:1px;background:#fff"></div>
<div class="a" style="left:281px;top:433px;width:1px;height:118px;background:#fff"></div>
<div class="a" style="left:282px;top:434px;width:281px;height:18px;background:#000080"></div>
<div class="a" style="left:563px;top:433px;width:1px;height:119px;background:#a0a0a0"></div>
<div class="a" style="left:282px;top:452px;width:281px;height:1px;background:#a0a0a0"></div>
<div class="a" style="left:281px;top:551px;width:283px;height:1px;background:#a0a0a0"></div>
<div class="a" style="left:286px;top:456px;width:1px;height:92px;background:#a0a0a0"></div>
<div class="a" style="left:286px;top:456px;width:273px;height:1px;background:#a0a0a0"></div>
<div class="a" style="left:287px;top:457px;width:272px;height:91px;background:#fff"></div>
<div class="a" style="left:559px;top:456px;width:1px;height:93px;background:#e3e3e3"></div>
<div class="a" style="left:286px;top:548px;width:274px;height:1px;background:#e3e3e3"></div>
<div class="a" style="left:287px;top:457px;width:268px;height:91px;overflow:hidden">
<div class="t" style="left:4.699999999999989px;top:2.80px;font-weight:bold;transform:scaleX(0.9409);transform-origin:0 0;">OS&nbsp; (C:)</div>
<div class="t" style="left:4.699999999999989px;top:22.80px;transform:scaleX(0.9089);transform-origin:0 0;">84.82 GB NTFS</div>
<div class="t" style="left:4.699999999999989px;top:42.80px;transform:scaleX(0.9750);transform-origin:0 0;">Healthy (Boot, Page File, Crash Dump, Basic Data Partition)</div>
</div>
<div class="a" style="left:565px;top:433px;width:321px;height:1px;background:#fff"></div>
<div class="a" style="left:565px;top:433px;width:1px;height:118px;background:#fff"></div>
<div class="a" style="left:566px;top:434px;width:320px;height:18px;background:#000080"></div>
<div class="a" style="left:886px;top:433px;width:1px;height:119px;background:#a0a0a0"></div>
<div class="a" style="left:566px;top:452px;width:320px;height:1px;background:#a0a0a0"></div>
<div class="a" style="left:565px;top:551px;width:322px;height:1px;background:#a0a0a0"></div>
<div class="a" style="left:570px;top:456px;width:1px;height:92px;background:#a0a0a0"></div>
<div class="a" style="left:570px;top:456px;width:312px;height:1px;background:#a0a0a0"></div>
<div class="a" style="left:571px;top:457px;width:311px;height:91px;background:#fff"></div>
<div class="a" style="left:882px;top:456px;width:1px;height:93px;background:#e3e3e3"></div>
<div class="a" style="left:570px;top:548px;width:313px;height:1px;background:#e3e3e3"></div>
<div class="a" style="left:571px;top:457px;width:307px;height:91px;overflow:hidden">
<div class="t" style="left:4.7000000000000455px;top:2.80px;font-weight:bold;transform:scaleX(1.0225);transform-origin:0 0;">New Volume&nbsp; (D:)</div>
<div class="t" style="left:4.7000000000000455px;top:22.80px;transform:scaleX(0.9400);transform-origin:0 0;">390.62 GB NTFS</div>
<div class="t" style="left:4.7000000000000455px;top:42.80px;transform:scaleX(0.9709);transform-origin:0 0;">Healthy (Basic Data Partition)</div>
</div>
<div class="a" style="left:888px;top:433px;width:172px;height:1px;background:#fff"></div>
<div class="a" style="left:888px;top:433px;width:1px;height:118px;background:#fff"></div>
<div class="a" style="left:889px;top:434px;width:171px;height:18px;background:#000080"></div>
<div class="a" style="left:1060px;top:433px;width:1px;height:119px;background:#a0a0a0"></div>
<div class="a" style="left:889px;top:452px;width:171px;height:1px;background:#a0a0a0"></div>
<div class="a" style="left:888px;top:551px;width:173px;height:1px;background:#a0a0a0"></div>
<div class="a" style="left:893px;top:456px;width:1px;height:92px;background:#a0a0a0"></div>
<div class="a" style="left:893px;top:456px;width:163px;height:1px;background:#a0a0a0"></div>
<div class="a" style="left:894px;top:457px;width:162px;height:91px;background:#fff"></div>
<div class="a" style="left:1056px;top:456px;width:1px;height:93px;background:#e3e3e3"></div>
<div class="a" style="left:893px;top:548px;width:164px;height:1px;background:#e3e3e3"></div>
<div class="a" style="left:894px;top:457px;width:158px;height:91px;overflow:hidden">
<div class="t" style="left:4.7000000000000455px;top:2.80px;transform:scaleX(0.9400);transform-origin:0 0;"></div>
<div class="t" style="left:4.7000000000000455px;top:22.80px;transform:scaleX(0.9400);transform-origin:0 0;">1.03 GB</div>
<div class="t" style="left:4.7000000000000455px;top:42.80px;transform:scaleX(0.9750);transform-origin:0 0;">Healthy (Recovery Partition)</div>
</div>
<div class="a" style="left:1062px;top:433px;width:131px;height:1px;background:#fff"></div>
<div class="a" style="left:1062px;top:433px;width:1px;height:118px;background:#fff"></div>
<div class="a" style="left:1063px;top:434px;width:130px;height:18px;background:#000080"></div>
<div class="a" style="left:1193px;top:433px;width:1px;height:119px;background:#a0a0a0"></div>
<div class="a" style="left:1063px;top:452px;width:130px;height:1px;background:#a0a0a0"></div>
<div class="a" style="left:1062px;top:551px;width:132px;height:1px;background:#a0a0a0"></div>
<div class="a" style="left:1067px;top:456px;width:1px;height:92px;background:#a0a0a0"></div>
<div class="a" style="left:1067px;top:456px;width:122px;height:1px;background:#a0a0a0"></div>
<div class="a" style="left:1068px;top:457px;width:121px;height:91px;background:#fff"></div>
<div class="a" style="left:1189px;top:456px;width:1px;height:93px;background:#e3e3e3"></div>
<div class="a" style="left:1067px;top:548px;width:123px;height:1px;background:#e3e3e3"></div>
<div class="a" style="left:1068px;top:457px;width:117px;height:91px;overflow:hidden">
<div class="t" style="left:4.7000000000000455px;top:2.80px;transform:scaleX(0.9400);transform-origin:0 0;"></div>
<div class="t" style="left:4.7000000000000455px;top:22.80px;transform:scaleX(0.9400);transform-origin:0 0;">200 MB</div>
<div class="t" style="left:4.7000000000000455px;top:42.80px;transform:scaleX(0.9750);transform-origin:0 0;">Healthy (Recovery Partition)</div>
</div>
<div class="a" style="left:142px;top:564px;width:443px;height:1px;background:#fff"></div>
<div class="a" style="left:142px;top:564px;width:1px;height:118px;background:#fff"></div>
<div class="a" style="left:143px;top:565px;width:442px;height:18px;background:#000080"></div>
<div class="a" style="left:585px;top:564px;width:1px;height:119px;background:#a0a0a0"></div>
<div class="a" style="left:143px;top:583px;width:442px;height:1px;background:#a0a0a0"></div>
<div class="a" style="left:142px;top:682px;width:444px;height:1px;background:#a0a0a0"></div>
<div class="a" style="left:142px;top:583px;width:443px;height:99px;background:#c0c0c0"></div>
<div class="a" style="left:141px;top:583px;width:1px;height:100px;background:#a0a0a0"></div>
<div class="a hatch" style="left:147px;top:588px;width:435px;height:89px;"></div>
<div class="a" style="left:146px;top:587px;width:1px;height:90px;background:#a0a0a0"></div>
<div class="a" style="left:146px;top:587px;width:437px;height:1px;background:#a0a0a0"></div>
<div class="a" style="left:148px;top:588px;width:429px;height:91px;overflow:hidden">
<div class="t" style="left:4px;top:3.10px;font-weight:bold;background:#fff;padding-right:1px;transform:scaleX(0.8916);transform-origin:0 0;">RECOVERY&nbsp;&nbsp; (E:)</div>
<div class="t" style="left:4px;top:23.10px;background:#fff;padding-right:1px;transform:scaleX(0.9401);transform-origin:0 0;">32.00 GB FAT32</div>
<div class="t" style="left:4px;top:43.10px;background:#fff;padding-right:1px;transform:scaleX(0.9863);transform-origin:0 0;">Healthy (Active, Primary Partition)</div>
</div>
<div class="a" style="left:587px;top:564px;width:435px;height:1px;background:#fff"></div>
<div class="a" style="left:587px;top:564px;width:1px;height:118px;background:#fff"></div>
<div class="a" style="left:588px;top:565px;width:434px;height:18px;background:#000"></div>
<div class="a" style="left:1022px;top:564px;width:1px;height:119px;background:#a0a0a0"></div>
<div class="a" style="left:588px;top:583px;width:434px;height:1px;background:#a0a0a0"></div>
<div class="a" style="left:587px;top:682px;width:436px;height:1px;background:#a0a0a0"></div>
<div class="a" style="left:592px;top:587px;width:1px;height:92px;background:#a0a0a0"></div>
<div class="a" style="left:592px;top:587px;width:426px;height:1px;background:#a0a0a0"></div>
<div class="a" style="left:593px;top:588px;width:425px;height:91px;background:#fff"></div>
<div class="a" style="left:1018px;top:587px;width:1px;height:93px;background:#e3e3e3"></div>
<div class="a" style="left:592px;top:679px;width:427px;height:1px;background:#e3e3e3"></div>
<div class="a" style="left:5px;top:921px;width:1192px;height:1px;background:#fff"></div>
<div class="a" style="left:5px;top:921px;width:1px;height:24px;background:#fff"></div>
<div class="a" style="left:4px;top:921px;width:1px;height:24px;background:#cfcfcf"></div>
<div class="a" style="left:4px;top:944px;width:1193px;height:1px;background:#a0a0a0"></div>
<div class="a" style="left:1196px;top:921px;width:1px;height:24px;background:#a0a0a0"></div>
<div class="a" style="left:11px;top:925px;width:13.5px;height:16px;background:#000;box-shadow:0 0 0 1px #fff"></div>
<div class="t" style="left:31.4px;top:923.60px;font-size:15px;color:#000;transform:scaleX(0.9722);transform-origin:0 0;">Unallocated</div>
<div class="a" style="left:117px;top:925px;width:13px;height:16px;background:#000080;box-shadow:0 0 0 1px #fff"></div>
<div class="t" style="left:136px;top:923.60px;font-size:15px;color:#000;transform:scaleX(1.0073);transform-origin:0 0;">Primary partition</div>
<div class="a" style="left:2px;top:946px;width:1198px;height:1px;background:#fff"></div>
<div class="a" style="left:2px;top:947px;width:1198px;height:30px;background:#f0f0f0"></div>
<div class="a" style="left:924px;top:950px;width:1px;height:26px;background:#dcdcdc"></div>
<div class="a" style="left:1090px;top:950px;width:1px;height:26px;background:#dcdcdc"></div>
<div class="a" style="left:381px;top:601px;width:323px;height:326px;background:#f9f9f9;border:1px solid #dedede;border-radius:5px;box-shadow:0 4px 10px rgba(0,0,0,0.16)"></div>
<div class="t" style="left:428.7px;top:610.30px;font-size:15px;color:#000;transform:scaleX(0.9598);transform-origin:0 0;">Open</div>
<div class="t" style="left:428.7px;top:637.20px;font-size:15px;color:#000;transform:scaleX(0.9282);transform-origin:0 0;">Explore</div>
<div class="t" style="left:428.7px;top:676.00px;font-size:15px;color:#a0a0a0;transform:scaleX(0.9716);transform-origin:0 0;">Mark Partition as Active</div>
<div class="t" style="left:428.7px;top:703.80px;font-size:15px;color:#000;transform:scaleX(0.9169);transform-origin:0 0;">Change Drive Letter and Paths…</div>
<div class="t" style="left:428.7px;top:730.70px;font-size:15px;color:#000;transform:scaleX(0.8611);transform-origin:0 0;">Format…</div>
<div class="t" style="left:428.7px;top:770.20px;font-size:15px;color:#a0a0a0;transform:scaleX(0.8949);transform-origin:0 0;">Extend Volume…</div>
<div class="t" style="left:428.7px;top:797.10px;font-size:15px;color:#a0a0a0;transform:scaleX(0.9074);transform-origin:0 0;">Shrink Volume…</div>
<div class="t" style="left:428.7px;top:824.80px;font-size:15px;color:#000;transform:scaleX(0.9007);transform-origin:0 0;">Delete Volume…</div>
<div class="t" style="left:428.7px;top:863.70px;font-size:15px;color:#000;transform:scaleX(0.9444);transform-origin:0 0;">Properties</div>
<div class="t" style="left:428.7px;top:902.50px;font-size:15px;color:#000;transform:scaleX(0.9408);transform-origin:0 0;">Help</div>
<div class="a" style="left:393px;top:663px;width:302px;height:1px;background:#e0e0e0"></div>
<div class="a" style="left:393px;top:757px;width:302px;height:1px;background:#e0e0e0"></div>
<div class="a" style="left:393px;top:851px;width:302px;height:1px;background:#e0e0e0"></div>
<div class="a" style="left:393px;top:890px;width:302px;height:1px;background:#e0e0e0"></div>
<svg class="a" style="left:0;top:0" width="1200" height="977" viewBox="0 0 1200 977">
<polygon points="498,871.5 533,837 534.5,849 690.5,770.5 694,777.5 541,857.5 548,865" fill="#5a1010" opacity="0.5" transform="translate(0.8,1)"/>
<polygon points="498,871.5 533,837 534.5,849 690.5,770.5 694,777.5 541,857.5 548,865" fill="#f21d1d"/>
</svg>
</div>
</body></html>
